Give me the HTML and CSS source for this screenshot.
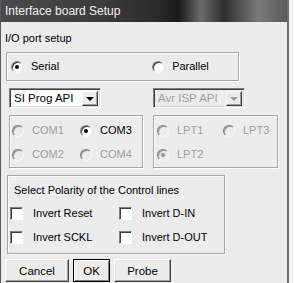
FILE: index.html
```html
<!DOCTYPE html>
<html>
<head>
<meta charset="utf-8">
<link rel="stylesheet" href="styles.css">
</head>
<body>
<div class="window">
  <div class="titlebar">Interface board Setup</div>
  <div class="content">
    <div class="caption">I/O port setup</div>
    <div class="group mode">
      <label class="opt opt-serial"><span class="radio on"></span>Serial</label>
      <label class="opt opt-parallel"><span class="radio"></span>Parallel</label>
    </div>
    <div class="selects">
      <div class="select sel-com"><span class="sel-text">SI Prog API</span><span class="arrow"><span class="tri"></span></span></div>
      <div class="select sel-lpt disabled"><span class="sel-text">Avr ISP API</span><span class="arrow"><span class="tri"></span></span></div>
    </div>
    <div class="ports">
      <div class="group com">
        <label class="opt dis"><span class="radio"></span>COM1</label>
        <label class="opt"><span class="radio on"></span>COM3</label>
        <label class="opt dis"><span class="radio"></span>COM2</label>
        <label class="opt dis"><span class="radio"></span>COM4</label>
      </div>
      <div class="group lpt">
        <label class="opt dis"><span class="radio"></span>LPT1</label>
        <label class="opt dis"><span class="radio"></span>LPT3</label>
        <label class="opt dis"><span class="radio on"></span>LPT2</label>
      </div>
    </div>
    <div class="group polarity">
      <div class="pol-title">Select Polarity of the Control lines</div>
      <div class="checks">
        <label class="chk"><span class="box"></span>Invert Reset</label>
        <label class="chk"><span class="box"></span>Invert D-IN</label>
        <label class="chk"><span class="box"></span>Invert SCKL</label>
        <label class="chk"><span class="box"></span>Invert D-OUT</label>
      </div>
    </div>
    <div class="buttons">
      <div class="btn btn-cancel">Cancel</div>
      <div class="btn btn-ok">OK</div>
      <div class="btn btn-probe">Probe</div>
    </div>
  </div>
</div>
</body>
</html>
```

FILE: styles.css
```css
html, body {
  margin: 0;
  padding: 0;
  background: #f4f4f4;
}
body {
  width: 294px;
  height: 283px;
  overflow: hidden;
  font-family: "Liberation Sans", Arial, sans-serif;
  font-size: 11px;
  color: #000;
}
.window {
  width: 289px;
  height: 283px;
  background: #ececec;
  border-left: 1px solid #5a5a5a;
  border-right: 2px solid #6e6e6e;
  box-sizing: border-box;
}
.titlebar {
  height: 22px;
  line-height: 23px;
  padding-left: 4px;
  color: #f2f2f2;
  font-size: 12px;
  background: linear-gradient(90deg, #4a4a4a 0%, #3c3c3c 35%, #2a2a2a 55%, #1a1a1a 62%, #6a6a6a 70%, #2e2e2e 78%, #7a7a7a 90%, #5a5a5a 100%);
}
.content {
  display: flex;
  flex-direction: column;
  align-items: flex-start;
}
.caption {
  margin: 10px 0 0 4px;
  line-height: 13px;
  height: 13px;
}
.group {
  border: 1px solid #a6a6a6;
  box-shadow: inset 1px 1px 0 #fff, 1px 1px 0 #fff;
  box-sizing: border-box;
}
.mode {
  margin: 7px 0 0 5px;
  width: 233px;
  height: 29px;
  display: flex;
  align-items: center;
}
.opt {
  display: flex;
  align-items: center;
  height: 13px;
  line-height: 13px;
  white-space: nowrap;
}
.opt.dis {
  color: #a0a0a0;
}
.radio {
  width: 10px;
  height: 10px;
  border-radius: 50%;
  border: 1px solid;
  border-color: #7d7d7d #f8f8f8 #f8f8f8 #7d7d7d;
  box-shadow: inset 1px 1px 0 #3a3a3a;
  background: #fff;
  display: flex;
  align-items: center;
  justify-content: center;
  flex: none;
}
.dis .radio {
  background: #ececec;
  box-shadow: inset 1px 1px 0 #9a9a9a;
}
.radio.on::after {
  content: "";
  width: 4px;
  height: 4px;
  border-radius: 50%;
  background: #000;
}
.dis .radio.on::after {
  background: #909090;
}
.opt-serial {
  margin-left: 4px;
}
.opt-serial .radio {
  margin-right: 8px;
}
.opt-parallel {
  margin-left: 93px;
}
.opt-parallel .radio {
  margin-right: 8px;
}
.selects {
  display: flex;
  margin: 7px 0 0 8px;
}
.select {
  width: 92px;
  height: 20px;
  box-sizing: border-box;
  border: 1px solid;
  border-color: #808080 #fff #fff #808080;
  box-shadow: inset 1px 1px 0 #404040, inset -1px -1px 0 #d8d8d8;
  background: #fff;
  display: flex;
  align-items: center;
  padding: 2px 2px 2px 4px;
}
.sel-text {
  flex: 1;
  line-height: 14px;
  font-size: 11.5px;
}
.arrow {
  width: 16px;
  height: 15px;
  box-sizing: border-box;
  background: #ececec;
  border: 1px solid;
  border-color: #f8f8f8 #404040 #404040 #f8f8f8;
  box-shadow: inset -1px -1px 0 #a0a0a0;
  display: flex;
  align-items: center;
  justify-content: center;
}
.tri {
  width: 0;
  height: 0;
  border-left: 4px solid transparent;
  border-right: 4px solid transparent;
  border-top: 4px solid #000;
  margin-top: 1px;
}
.sel-lpt {
  margin-left: 52px;
  background: #ececec;
  color: #a0a0a0;
}
.sel-lpt .tri {
  border-top-color: #a0a0a0;
}
.ports {
  display: flex;
  margin: 7px 0 0 8px;
}
.com, .lpt {
  height: 53px;
  display: grid;
  grid-template-columns: auto auto;
  grid-auto-rows: 24px;
  align-content: center;
  padding-top: 2px;
}
.com {
  width: 134px;
  grid-template-columns: 68px 60px;
  padding-left: 2px;
}
.com .radio, .lpt .radio {
  margin-right: 8px;
}
.com .opt, .lpt .opt {
  align-self: center;
}
.lpt {
  margin-left: 10px;
  width: 125px;
  grid-template-columns: 66px 50px;
  padding-left: 3px;
}
.polarity {
  margin: 7px 0 0 6px;
  width: 218px;
  height: 79px;
  padding: 8px 0 0 6px;
}
.pol-title {
  line-height: 13px;
}
.checks {
  margin: 10px 0 0 -4px;
  display: grid;
  grid-template-columns: 109px 100px;
  grid-auto-rows: 24px;
}
.chk {
  display: flex;
  align-items: center;
  height: 13px;
  line-height: 13px;
  white-space: nowrap;
}
.box {
  width: 11px;
  height: 11px;
  border: 1px solid;
  border-color: #808080 #fff #fff #808080;
  box-shadow: inset 1px 1px 0 #404040;
  background: #fff;
  margin-right: 10px;
  flex: none;
}
.buttons {
  display: flex;
  margin: 5px 0 0 4px;
  gap: 4px;
}
.btn {
  height: 23px;
  box-sizing: border-box;
  border: 1px solid;
  border-color: #fff #404040 #404040 #fff;
  box-shadow: inset -1px -1px 0 #a0a0a0;
  background: #ececec;
  display: flex;
  align-items: center;
  justify-content: center;
  font-size: 11.5px;
}
.btn-cancel {
  width: 64px;
}
.btn-ok {
  width: 37px;
  border-color: #000;
  box-shadow: inset 1px 1px 0 #fff, inset -1px -1px 0 #808080;
}
.btn-probe {
  width: 57px;
}
```
